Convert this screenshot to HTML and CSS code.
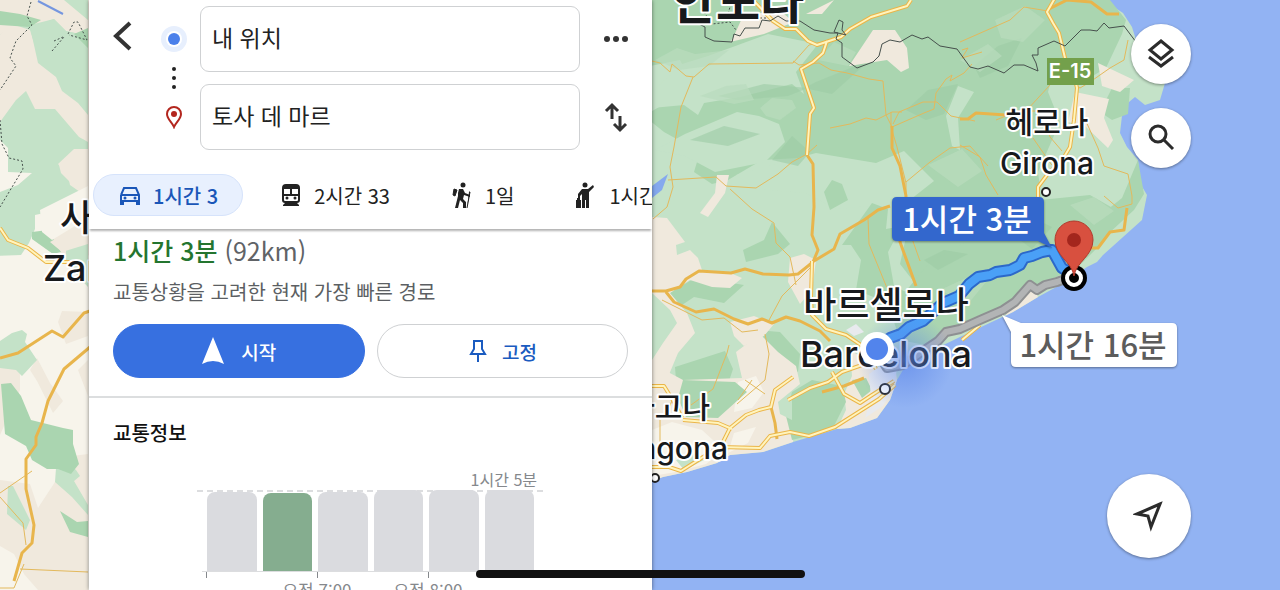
FILE: index.html
```
<!DOCTYPE html>
<html lang="ko">
<head>
  <meta charset="UTF-8">
  <meta name="viewport" content="width=device-width, initial-scale=1.0">
  <title>토사 데 마르</title>
  <link rel="stylesheet" href="styles.css">
</head>
<body>
  <svg class="map" viewBox="0 0 1280 590" preserveAspectRatio="xMidYMid slice" aria-hidden="true">
    <defs>
      <radialGradient id="beam">
        <stop offset="0" stop-color="#5b86e8" stop-opacity=".65"/>
        <stop offset="1" stop-color="#5b86e8" stop-opacity="0"/>
      </radialGradient>
      <path id="road-a" d="M911 0l-4 6-36 11-21 12-9 8-24 8-9-4-12-12h-11l-12-8-21-22M827 41l-4 12-10 9-12 7 13 39-4 6-3 41"/>
      <path id="road-b" d="M1055-2l-8 14 6 11 6 10 6 25 9 16 3 14-3 32-4 27-6 10-17 18-9 12 0 20-2 22M812 261l-1 37 1 17 14 14 20 6 18 12 12 22M980 325l-18 15"/>
      <path id="road-c" d="M793 377l-18 13-4 17-12 3-13 5-16 13-8 16M884 358l-22 7-20 7-14 10-18 6-22 12M652 467h17l12 4 22-14 17-10 40 1 10-12 20-4 19 4 26-9 22-14 22-14 16-14M832 372l12 22 16 9 12-8 22-14M683 420l35 3 14 6M652 386h12l10 16 8 16"/>
    </defs>

    <!-- land west of the panel -->
    <rect width="1280" height="590" fill="#92b3f3"/>
    <rect width="100" height="590" fill="#f7f4eb"/>
    <path class="sand" d="M0 0h100v250l-30 14-20-24-22-60-12-30-16-4z"/>
    <path class="forest" d="M0 35l18-15 12 5 24-6 12 12 22 5v110l-20-30-29-36-18-4z"/>
    <path class="sand" d="M0 35l9-12 21 7 10 32 23 16 25 26v40l-8-8-24-28-21-1-9-16-14 6-12 20z"/>
    <path class="forest" d="M54 19l12 12 22 5v79l-10-12-16-12-6-14-18-14-8-36zM0 122l16-22 10-9 9 18h20l24 28 9 5v7l-14 0-16 15 10 12 2 9 10 7-5 9-26 11-14 3 0 14-6 14-8 12-31 1zM64 0h24v20z"/>
    <path class="wood" d="M0 11l20 3 21 6-11 7-30-2zM74 34l14-6v20zM32 232l16-2 13 22-8 2-21-15z"/>
    <path class="forest" d="M66 243h22v44l-22-24z"/>
    <path class="cream" d="M0 140l8 8 0 24 24 1-14 12-18 7zM40 210l48-24v32l-36 22-10-8z"/>
    <path class="sand" d="M59 165l16-15 13 2v23l-17 8-10-10zM50 242l28-16 10 6v12l-26 8zM62 311l26 1v24l-22 8-8-22zM30 370l7-12 13 25 13 18-10 12-16-32zM78 370l10-10v36zM0 480l30 4 8 24 34-52 16-2v136h-50l-14-16-10-20-14-8zM0 345l20 10v35l-20 45z"/>
    <path class="forest" d="M0 341l12-8 10-3 5 4-2 8 12 18-15 16-6-6-16-2zM8 486h5l17 34-4 10-19-16zM56 468l10-6 10 8 4 6-6 5 14 24v10l-16-18-17-15z"/>
    <path class="wood" d="M1 384l10-1 10 13 10 24 32 8 10 2v14l6 20-8 10-13-5-11 0-15-9-6-14-21-12zM60 511l17 11 11-1v16l-18-5z"/>

    <!-- mainland -->
    <path class="forest" d="M650 0L1103 0L1123 13L1132 27L1136 40L1140 76L1165 83L1160 100L1145 105L1135 97L1123 107L1120 133L1127 147L1138 160L1140 183L1147 195L1142 220L1103 255L1097 262L1087 267L1060 285L1038 297L1013 312L960 337L933 350L903 370L897 380L890 400L877 418L850 428L837 429L793 442L763 452L730 455L717 463L687 472L663 477L650 482z"/>
    <path class="wood" d="M650 0h460l16 20-4 14-16 34-20 12-14 26-20 50-2 50-30 22-26 18-38 20-42 16-14-18 8-36-16-28-42-24-50-18-38 2-34 20-16 4-18-12 6-20-36-20-20-16 30-18 14-22-8-16-30 6-16 36z"/>
    <path class="forest" d="M708 56l-26 8-30 28v16l32-3 14 10 6-12 36-6 52-13 12 10-8-22 22-28-50-10zM655 150l30-16 52-22 22 4 20 8 6 18-20 20-50 10-30-16zM736 175l80-22 60 10 28-12 30 30-28 22-70 6-30-16-50-4zM1056 60l20 20 34-4 12 30-10 40 14 40-30 50-40 8-12-26-6-46 22-50-12-30zM958 86l-12 30 6 30 8 4-2-32 16-26z"/>
    <path class="wood" d="M930 262L1040 200L1090 195L1125 215L1100 245L1080 265L1030 290L960 330L925 345L900 340L890 310zM743 250l21-10 8-18 18 22-12 10-32 8zM842 245l30-42 16 6-2 20 16-3-14 26 6 34 20 10-38 2-20-8 5-30-10-15zM740 342l14-12 26 2 20 22-2 18-18-6-22-16zM700 275l20 6 24 4-20 18-30-6-18 12-10-14zM675 367l50-16 8 18-10 30-46-6zM824 192l8-12 10 4 6 16-18 10zM1092 222l30-24 16-38 6 34-10 16-28 26zM1112 88l18 0-2 26-16 6-12-8z"/>
    <path class="shade" d="M718 96l46-12 44 4-20 8-50 4zM816 82l54-22-38 34-28-6zM906 110l22-20 30-6-14 30-18 6zM924 260l20-10 24 4-30 16zM772 160l20-24 18 16-12 14zM690 140l34-14 36 8-32 12zM974 66l24-20 24-8-14 28-28 12zM1000 225l24-12 28 14-20 22z"/>
    <path class="hill" d="M655 60l22-12 18 6 34-4-20 16-30 4zM700 96l26-10 20-2 8 16-20 4zM760 108l12-10 20 2 4 8-16 12-14-4zM818 60l16-18 22 10-8 14zM960 60l28-16 14 12-22 16zM928 165l34-16 20 22-24 16zM995 20l30-14 20 14-22 22-22-4zM940 290l26-12 20 4-18 22zM1070 205l24-8 20 14-20 14z"/>
    <path class="sand" d="M733 38l10-22 36-6 15 12-30 12-34 8zM806 14l28-14-12 14zM849 66l24-36 22 0 12 18 2 20-8 4-14-12zM717 175l12 0-4 18-17 24-8-4 15-20zM790 258l14-4 12 6-4 30-12 14-12-22zM730 322l24-6 20 8-10 12-20 10-10-10zM1098 63L1134 80L1120 92L1102 86zM1075 92L1109 99L1104 118L1113 140L1108 148L1085 126L1068 122zM1005 316L1024 293L1034 290L1038 297L1013 312z"/>
    <path class="sand" d="M652 217L667 218L685 242L676 245L677 255L690 250L698 258L702 270L728 272L742 278L730 288L712 287L690 280L670 293L687 313L695 333L678 353L668 377L652 390V360L663 343L677 323L670 310L652 293z"/>
    <path class="sand" d="M652 378L668 372L683 380L742 378L736 352L760 334L778 352L796 366L800 384L778 402L795 414L793 442L763 452L730 455L717 463L687 472L663 477L652 481z"/>
    <path class="sand" d="M850 350L876 366L896 372L897 380L890 400L877 418L850 428L837 429L846 410L844 394L852 376z"/>
    <path class="cream" d="M738 382l18-6 8 16-12 16-18 4zM652 430l20-8 30 8 22 20-18 14-30 8-24 4zM734 433l22-6-8 16-20 10z"/>
    <path class="wood" d="M683 380L735 382L747 392L718 418L686 417L678 398zM792 392L812 380L842 386L846 402L834 426L812 435L792 440L786 416zM852 380l14-2 6 12-10 8z"/>
    <path class="forest" d="M676 460l18-6 10 6-20 10zM778 402l14-6 0 24-12-6z"/>
    <path fill="#e8eaee" d="M869 374l16-11 12 7-6 22-8 14-18 12 6-20zM846 330l10-6 8 8-10 4z"/>
    <path class="water" d="M652 186l16-12-6 16-10 8z"/>

    <g class="minor-road">
      <path d="M652 61l8 2 10 9 2-8 14 12 8 1 15-13 84-1 16-18 14-3M793 61l6 4 20-2 12 7 16 3 22 6 14 2 3 34 6 12 32-14 10-4 2-16 10-14 6-4-2 6 14-8 8-9M693 77l-12 30-7 40-4 20 3 20-6 20-14 12M668 180l48-3 10 9 30 2 22-14 14-12 15-8 10-9M830 128l20-4 16-6 10 2 16-8h10M891 112v15l6 20 9 36 0 14-1 22 15 42M906 182l24-20 20-14 20-2 18 20M893 124l6-12 24-10h14l14 14 24 5M996 120l20-8 14-6M730 189l22 20 22 14 2 20 14 14 6 28M662 300l20 10 20 10 22-2 18 14 16-2M729 345l-2 8-14 36-22 16M765 334l4 20-4 26-28 24M812 266l-30 30-14 26M868 218l1 26 18 44M960 145l20 12 6 18 12 20"/>
      <path d="M960 42l50-22 14-13 24 4M962 50l6-2-6 10 20-6M1050 85l-24 26 16 0 8 26 12 14M1128 40l-4 20-14 8-20 14-10 6-14-8M1080 108l18 40 6 18 24 8 4 22 0 8-14 4-14-12M1033 138l18 26 12 12M0 493l32-22M0 497l23 26 3 22M20 569l68 3M0 588h14l10-24M665 418l8-20M745 380l20 14M660 420v30M752 380l-14 20"/>
    </g>
    <g class="mid-road">
      <path d="M807 155l6 9 1 43-2 28 6 15-5 12-15 12-9 1-26-1-18-5-14 4-32-2-13 8-6 8-14 4h-14M814 261l20-12 6-15 24-14 14-10 12-4M892 126l0 22 8 18 6 30-6 46 8 22 8 22M666 292l8 10 22 10 18-3 20 10 14 5 14-5 10 4 14-6 14 4 20 10 10 10M771 407l4 16 2 16M864 378l-20 8-22 6M960 119h8l8-6 30 2M1047 10l20-10 24 2 16 12 12 0M1090 248h8l12-16 14-2 3-22"/>
      <path d="M0 358l18-5 34-22 11 6 21-24 6-2M90 347l-26 22-16 32-6 22-6 14v8l-10 14v30l8 36-2 18-10 10-8 28"/>
    </g>
    <g class="road-edge"><use href="#road-a"/><use href="#road-b"/><use href="#road-c"/><path d="M0 228l8 12 20 8 18 14h34"/></g>
    <g class="road-fill"><use href="#road-a"/><use href="#road-b"/><use href="#road-c"/><path d="M0 228l8 12 20 8 18 14h34"/></g>

    <path class="border" d="M697 23l8 4v10l9 4 18 1 2-8 6 2 5-8 14 0 3-8 8 1 8-5 8 5 14 0 14 9 16 3h8l-2 6 6 4 0 14 15 11 16-6 6-6 3-12 8-4 10 2 12-7 10 4 6-2 12 9 17 3 13 18 8 2 10-3 16 7 10-8 10 0 14 6-2-8-4-8 6 0v-7l16-7 11 5 16-16h9l7 1 7-8 5 5 15-2 12 16 18-4M834 32l5-12 4 2-1 8 4 5z"/>
    <path class="border border--dashed" d="M31 2l-4 14 5 9-16 16-6 17 6 8-16 24M0 120l2 24 7 14 13 3 1 8-23 38M52 51l12-14M54 41l9-4M68 34l6-12h4l9 18-18-5M704 12l8 12 18-2 6 8M748 18h20M732 0l-4 14"/>
    <path d="M38 1l25 13" stroke="#7596df" stroke-width="2"/>

    <rect x="1047" y="58" width="47" height="27" fill="#73a04b"/>
    <text class="shield" x="1070" y="78">E-15</text>

    <g class="route">
      <path class="route__alt-edge" d="M1068 278l-11 4-12 3-8 5-7-5-7 8-8 9-12 8-23 10-20 9-14 3-8 9-15 10-20 14-16 3-10-16"/>
      <path class="route__alt" d="M1068 278l-11 4-12 3-8 5-7-5-7 8-8 9-12 8-23 10-20 9-14 3-8 9-15 10-20 14-16 3-10-16"/>
      <path class="route__main-edge" d="M877 348l13-10 11-4 8-7 14-6 20-18 16-7 10-12 9-7 12-2 6-3 14-2 10-5 4-7 8-2 10-4 10-2 10 18 14 8"/>
      <path class="route__main" d="M877 348l13-10 11-4 8-7 14-6 20-18 16-7 10-12 9-7 12-2 6-3 14-2 10-5 4-7 8-2 10-4 10-2 10 18 14 8"/>
    </g>

    <g class="place">
      <text class="place__xl" x="738" y="19">안도라</text>
      <text class="place__lg place--start" x="60" y="231">사</text>
      <text class="place__lg place--start" x="43" y="281">Zar</text>
      <text class="place__md" x="1047" y="133">헤로나</text>
      <text class="place__md" x="1047" y="174">Girona</text>
      <text class="place__lg" x="886" y="318">바르셀로나</text>
      <text class="place__lg" x="886" y="367">Barcelona</text>
      <text class="place__md place--end" x="710" y="418">타라고나</text>
      <text class="place__md place--end" x="728" y="459">Tarragona</text>
    </g>
    <g class="city-dot">
      <circle cx="1046" cy="192" r="4"/><circle cx="885" cy="389" r="5"/><circle cx="655" cy="478" r="4"/>
    </g>

    <circle cx="905" cy="360" r="48" fill="url(#beam)"/>
    <circle cx="877" cy="349" r="17" fill="#fff"/>
    <circle cx="877" cy="349" r="11" fill="#5284ec"/>

    <circle cx="1074" cy="278" r="13"/>
    <circle cx="1074" cy="278" r="7" fill="none" stroke="#fff" stroke-width="4"/>
    <path d="M1074 276c-2-14-19-20-19-36a19 19 0 0 1 38 0c0 16-17 22-19 36z" fill="#d8503f" stroke="#b13a2d"/>
    <circle cx="1074" cy="240" r="7" fill="#a3261d"/>

    <g class="callout">
      <path class="callout__box callout__box--active" d="M897 197h142q5 0 5 5v31l8 15-14-7H897q-5 0-5-5v-34q0-5 5-5z"/>
      <text class="callout__time callout__time--active" x="967" y="231">1시간 3분</text>
      <path class="callout__box" d="M1002 315l19 8h151q5 0 5 5v34q0 5-5 5h-156q-5 0-5-5v-30z"/>
      <text class="callout__time" x="1093" y="357">1시간 16분</text>
    </g>
  </svg>

  <main class="panel">
    <form class="directions">
      <button class="icon-button icon-button--back" type="button" aria-label="뒤로">
        <svg width="24" height="32" viewBox="0 0 24 32"><path d="M20 3L6 16l14 13" fill="none" stroke="#333" stroke-width="4"/></svg>
      </button>
      <label class="directions__marker" for="from" aria-label="출발지">
        <svg width="28" height="28" viewBox="0 0 28 28"><circle cx="14" cy="14" r="13" fill="#e7effd"/><circle cx="14" cy="14" r="8" fill="#fff"/><circle cx="14" cy="14" r="6" fill="#4b80ea"/></svg>
      </label>
      <input class="directions__input" id="from" name="from" type="text" value="내 위치">
      <button class="icon-button" type="button" aria-label="더보기">
        <svg width="26" height="8" viewBox="0 0 26 8" fill="#333"><circle cx="4" cy="4" r="3"/><circle cx="13" cy="4" r="3"/><circle cx="22" cy="4" r="3"/></svg>
      </button>
      <svg class="directions__dots" width="4" height="24" viewBox="0 0 4 24" fill="#222"><circle cx="2" cy="3" r="2"/><circle cx="2" cy="12" r="2"/><circle cx="2" cy="21" r="2"/></svg>
      <label class="directions__marker directions__marker--to" for="to" aria-label="도착지">
        <svg width="18" height="24" viewBox="0 0 18 24"><path d="M9 22C7 17 2 14 2 9a7 7 0 0 1 14 0c0 5-5 8-7 13z" fill="none" stroke="#b3261e" stroke-width="2"/><circle cx="9" cy="9" r="3" fill="#b3261e"/></svg>
      </label>
      <input class="directions__input directions__input--to" id="to" name="to" type="text" value="토사 데 마르">
      <button class="icon-button icon-button--swap" type="button" aria-label="출발지와 도착지 바꾸기">
        <svg width="26" height="32" viewBox="0 0 26 32" fill="none" stroke="#333" stroke-width="3"><path d="M9 18V4M3 10l6-6 6 6M17 15v14M11 23l6 6 6-6"/></svg>
      </button>
    </form>

    <nav class="modes">
      <button class="modes__item modes__item--active" type="button">
        <svg width="24" height="24" viewBox="0 0 24 24"><path d="M3 12l3-7h12l3 7v8M3 12v8M3 12h18M2 18h20" fill="none" stroke="currentColor" stroke-width="2"/><path d="M2 18h4v4H2zM18 18h4v4h-4z" fill="currentColor"/><circle cx="7" cy="15" r="1.500" fill="currentColor"/><circle cx="17" cy="15" r="1.500" fill="currentColor"/></svg>
        1시간 3
      </button>
      <button class="modes__item" type="button">
        <svg width="24" height="24" viewBox="0 0 24 24"><path d="M7 1h10q4 0 4 4v12q0 3-3 3l2 2v1H4v-1l2-2q-3 0-3-3V5q0-4 4-4z" fill="currentColor"/><path d="M5 6h6v5H5zM13 6h6v5h-6zM5 13h14v4q0 1-1 1H6q-1 0-1-1z" fill="#fff"/><circle cx="8" cy="15" r="1.500" fill="currentColor"/><circle cx="16" cy="15" r="1.500" fill="currentColor"/></svg>
        2시간 33
      </button>
      <button class="modes__item" type="button">
        <svg width="24" height="26" viewBox="0 0 24 26"><circle cx="13" cy="3" r="2.500" fill="currentColor"/><path d="M9 7l4 0 2 4 5 2v2l-6-2-1 4 3 3v6h-3v-5l-3-3-2 8H5l3-12V11z" fill="currentColor"/><path d="M4 7l3 1-2 6-2-1zM19 10l1 0-3 16" fill="currentColor" stroke="currentColor"/></svg>
        1일
      </button>
      <button class="modes__item" type="button">
        <svg width="24" height="26" viewBox="0 0 24 26"><circle cx="11" cy="3" r="2.500" fill="currentColor"/><path d="M8 7h6l5-4 1 2-5 5v16h-3v-8h-1v8H8V12l-2 2v3H4v-5zM2 18h1v-2h3v2h1v8H2z" fill="currentColor"/></svg>
        1시간
      </button>
    </nav>

    <section class="summary">
      <h1 class="summary__title"><strong class="summary__time">1시간 3분</strong> (92km)</h1>
      <p class="summary__text">교통상황을 고려한 현재 가장 빠른 경로</p>
      <div class="summary__actions">
        <button class="button button--primary" type="button">
          <svg width="24" height="30" viewBox="0 0 24 30"><path d="M12 1l11 27q-11-6-22 0z" fill="#fff"/></svg>
          시작
        </button>
        <button class="button" type="button">
          <svg width="20" height="24" viewBox="0 0 20 24" fill="none" stroke="currentColor" stroke-width="2"><path d="M5 2h10M6 2v8l-3 5h14l-3-5V2M10 15v8"/></svg>
          고정
        </button>
      </div>
    </section>

    <section class="traffic">
      <h2 class="traffic__title">교통정보</h2>
      <div class="chart">
        <div class="chart__max">1시간 5분</div>
        <div class="chart__bars">
          <div class="chart__bar"></div>
          <div class="chart__bar chart__bar--now"></div>
          <div class="chart__bar"></div>
          <div class="chart__bar chart__bar--full"></div>
          <div class="chart__bar chart__bar--full"></div>
          <div class="chart__bar chart__bar--full"></div>
        </div>
        <div class="chart__axis">
          <span class="chart__tick"></span>
          <span class="chart__tick">오전 7:00</span>
          <span class="chart__tick">오전 8:00</span>
        </div>
      </div>
    </section>
  </main>

  <div class="controls">
    <button class="round-button" type="button" aria-label="지도 유형">
      <svg width="30" height="30" viewBox="0 0 30 30" fill="none" stroke="#2b2b2b" stroke-width="3"><path d="M15 2l11 9-11 9-11-9zM3 18l12 9 12-9"/></svg>
    </button>
    <button class="round-button" type="button" aria-label="검색">
      <svg width="30" height="30" viewBox="0 0 30 30" fill="none" stroke="#2b2b2b" stroke-width="3"><circle cx="12" cy="11" r="8"/><path d="M18 17l9 9"/></svg>
    </button>
  </div>
  <button class="round-button round-button--locate" type="button" aria-label="내 위치로 이동">
    <svg width="32" height="32" viewBox="0 0 32 32" fill="none" stroke="#2b2b2b" stroke-width="3"><path d="M27 4L4 14l11 2 3 11z"/></svg>
  </button>
  <div class="home-bar"></div>
</body>
</html>
```
FILE: styles.css
```
* {
  box-sizing: border-box;
}

body {
  margin: 0;
  height: 100vh;
  overflow: hidden;
  position: relative;
  background-color: #92b3f3;
  color: #222;
  font-family: "Noto Sans CJK KR", sans-serif;
}

button,
input {
  font-family: inherit;
  color: inherit;
}

button {
  border: none;
  background: none;
  padding: 0;
  cursor: pointer;
}

/* map */
.map {
  position: absolute;
  top: 0;
  left: 0;
  width: 100%;
  height: 100%;
}

.forest { fill: #c4e2c8; }
.wood { fill: #aad5b0; }
.shade { fill: #9ccba5; opacity: 0.6; }
.hill { fill: #b9dcbe; opacity: 0.7; }
.sand { fill: #f0e9dd; }
.cream { fill: #f7f4eb; }
.water { fill: #85a9ee; }

.minor-road,
.mid-road,
.road-edge,
.road-fill,
.border,
.route {
  fill: none;
  stroke-linejoin: round;
}

.minor-road {
  stroke: #e3b95c;
  stroke-width: 1;
}

.mid-road {
  stroke: #e8b54c;
  stroke-width: 3;
}

.road-edge {
  stroke: #ebb548;
  stroke-width: 4;
}

.road-fill {
  stroke: #fff4bd;
  stroke-width: 2;
}

.border {
  stroke: #46504c;
  stroke-width: 1;
}

.border--dashed {
  stroke-dasharray: 2 2;
}

.shield {
  fill: #fff;
  font-family: Inter, sans-serif;
  font-size: 20px;
  font-weight: 600;
  text-anchor: middle;
}

.route {
  stroke-linecap: round;
}

.route__main-edge { stroke: #2c68c9; stroke-width: 12; }
.route__main { stroke: #4aa0f7; stroke-width: 8; }
.route__alt-edge { stroke: #8e9092; stroke-width: 10; }
.route__alt { stroke: #b2b4b5; stroke-width: 6; }

.place {
  font-family: Inter, "Noto Sans CJK KR", sans-serif;
  font-weight: 500;
  fill: #17191c;
  stroke: #fff;
  stroke-width: 4;
  stroke-linejoin: round;
  paint-order: stroke;
  text-anchor: middle;
}

.place__md { font-size: 30px; }
.place__lg { font-size: 36px; }
.place__xl { font-size: 48px; font-weight: 700; }
.place--start { text-anchor: start; }
.place--end { text-anchor: end; }

.city-dot {
  fill: #fff;
  stroke: #222;
  stroke-width: 2;
}

.callout__box {
  fill: #fff;
  filter: drop-shadow(0 1px 1px rgba(0, 0, 0, 0.4));
}

.callout__box--active {
  fill: #3367cd;
}

.callout__time {
  fill: #5c5c5c;
  font-size: 31px;
  font-weight: 500;
  text-anchor: middle;
}

.callout__time--active {
  fill: #fff;
}

/* side panel */
.panel {
  position: relative;
  display: flex;
  flex-direction: column;
  width: 44%;
  min-width: 460px;
  height: 100%;
  margin-left: 89px;
  overflow: hidden;
  background-color: #fff;
  box-shadow: 0 0 4px rgba(0, 0, 0, 0.5);
}

.directions {
  display: grid;
  grid-template-columns: 50px 53px 1fr 72px;
  grid-template-rows: 66px 66px;
  row-gap: 12px;
  align-items: center;
  justify-items: center;
  padding: 6px 0 24px 8px;
}

.icon-button,
.directions__marker {
  display: flex;
  grid-row: 1;
  align-items: center;
  justify-content: center;
}

.directions__marker {
  grid-column: 2;
}

.icon-button--back {
  padding-bottom: 6px;
}

.icon-button--swap {
  grid-row: 2;
  grid-column: 4;
}

.directions__dots {
  grid-row: 1 / 3;
  grid-column: 2;
}

.directions__marker--to {
  grid-row: 2;
}

.directions__input {
  grid-row: 1;
  grid-column: 3;
  width: 100%;
  min-width: 0;
  height: 100%;
  padding: 0 11px 4px;
  border: 1px solid #cfd1d3;
  border-radius: 9px;
  outline: none;
  font-size: 23px;
}

.directions__input--to {
  grid-row: 2;
}

.modes {
  display: flex;
  flex-shrink: 0;
  gap: 12px;
  padding: 0 4px 13px;
  overflow: hidden;
  position: relative;
  box-shadow: 0 3px 2px -1px rgba(0, 0, 0, 0.3);
}

.modes__item {
  display: flex;
  flex-shrink: 0;
  align-items: center;
  gap: 11px;
  height: 42px;
  padding: 0 24px;
  border-radius: 21px;
  font-size: 20px;
  white-space: nowrap;
}

.modes__item--active {
  border: 1px solid #d6e3fb;
  background-color: #e8f0fe;
  color: #1a56b8;
  font-weight: 500;
}

.summary {
  padding: 3px 24px 18px;
  border-bottom: 2px solid #dcdedf;
}

.summary__title {
  margin: 0;
  color: #606367;
  font-size: 25px;
  font-weight: 400;
  line-height: 36px;
}

.summary__time {
  color: #24752f;
  font-weight: 500;
}

.summary__text {
  margin: 9px 0 17px;
  color: #5c5f63;
  font-size: 20px;
  line-height: 30px;
}

.summary__actions {
  display: flex;
  gap: 12px;
}

.button {
  display: flex;
  flex: 1;
  align-items: center;
  justify-content: center;
  gap: 14px;
  height: 54px;
  border: 1px solid #cfd1d3;
  border-radius: 27px;
  color: #1a5bc0;
  font-size: 19px;
  font-weight: 500;
}

.button--primary {
  gap: 16px;
  border-color: #3770e0;
  background-color: #3770e0;
  color: #fff;
}

.traffic {
  padding: 20px 24px 0;
}

.traffic__title {
  margin: 0 0 20px;
  color: #111;
  font-size: 20px;
  font-weight: 500;
  line-height: 30px;
}

.chart {
  max-width: 346px;
  margin-left: 84px;
  color: #85888c;
  font-size: 16px;
}

.chart__max {
  padding-right: 6px;
  border-bottom: 2px dashed #dcdddf;
  line-height: 22px;
  text-align: right;
}

.chart__bars {
  display: flex;
  align-items: flex-end;
  gap: 6px;
  height: 80px;
  margin: 0 5px;
  padding: 0 4px 0 5px;
  border-bottom: 1px solid #dcdddf;
}

.chart__bar {
  flex: 1;
  height: 79px;
  border-radius: 8px 8px 0 0;
  background-color: #dadbdf;
}

.chart__bar--now {
  height: 78px;
  background-color: #85ad8f;
}

.chart__bar--full {
  height: 81px;
}

.chart__axis {
  display: grid;
  grid-template-columns: repeat(3, 111px);
  padding-left: 9px;
  font-size: 17px;
}

/* the label is centred under its tick */
.chart__tick {
  display: flex;
  flex-direction: column;
  align-items: center;
  width: 0;
  line-height: 24px;
  white-space: nowrap;
}

.chart__tick::before {
  content: "";
  width: 1px;
  height: 6px;
  background-color: #85888c;
}

/* floating buttons */
.controls {
  position: absolute;
  top: 24px;
  right: 89px;
  display: flex;
  flex-direction: column;
  gap: 24px;
}

.round-button {
  display: flex;
  align-items: center;
  justify-content: center;
  width: 60px;
  height: 60px;
  border-radius: 50%;
  background-color: #fff;
  box-shadow: 0 1px 3px rgba(0, 0, 0, 0.4);
}

.round-button--locate {
  position: absolute;
  right: 89px;
  bottom: 32px;
  width: 84px;
  height: 84px;
}

.home-bar {
  position: absolute;
  bottom: 12px;
  left: 50%;
  width: 329px;
  height: 8px;
  margin-left: -164px;
  border-radius: 4px;
  background-color: #111;
}
```
